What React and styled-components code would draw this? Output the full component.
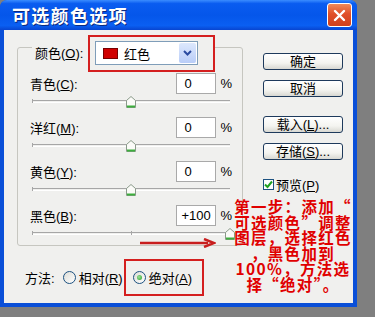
import React from 'react'
import styled, { createGlobalStyle } from 'styled-components';

const GlobalStyle = createGlobalStyle`
  html, body {
    margin: 0;
    padding: 0;
    background: #7f7f7f;
    width: 375px;
    height: 317px;
    overflow: hidden;
  }
  body {
    font-family: "Liberation Sans", "Noto Sans CJK SC", sans-serif;
    font-size: 13px;
    color: #000;
  }
`;

const Window = styled.div`
  position: relative;
  width: 357px;
  height: 307px;
  box-sizing: border-box;
  background: #0a4fd8;
  border-radius: 7px 7px 0 0;
  display: flex;
  flex-direction: column;
`;

const TitleBar = styled.div`
  height: 30px;
  display: flex;
  align-items: center;
  justify-content: space-between;
  padding: 0 5px 0 12px;
  border-radius: 7px 7px 0 0;
  background: linear-gradient(to bottom, #3a8cff 0%, #0a5cf0 12%, #0556ea 50%, #0a5ff2 85%, #0845d0 100%);
`;

const Title = styled.span`
  color: #fff;
  font-family: "Noto Sans CJK SC", sans-serif;
  font-weight: 700;
  font-size: 18px;
  letter-spacing: 1.3px;
  text-shadow: 1px 1px 0 #0a2a80;
`;

const CloseButton = styled.div`
  width: 23px;
  height: 22px;
  border: 1px solid #fff;
  border-radius: 3px;
  background: linear-gradient(to bottom, #f08a5a 0%, #e0502a 45%, #d0401c 100%);
  display: flex;
  align-items: center;
  justify-content: center;
`;

const Client = styled.div`
  margin: 0 4px 4px;
  height: 273px;
  background: #f0f0ee;
  display: flex;
  align-items: flex-start;
  gap: 20px;
  padding: 17px 0 0 13px;
  box-sizing: border-box;
`;

const LeftCol = styled.div`
  width: 226px;
  display: flex;
  flex-direction: column;
`;

const GroupBox = styled.div`
  height: 199px;
  box-sizing: border-box;
  border: 1px solid #c6c6c0;
  border-radius: 3px;
  display: flex;
  flex-direction: column;
`;

const Header = styled.div`
  display: flex;
  align-items: center;
  margin: -13px 0 0 14px;
`;

const Legend = styled.span`
  width: 56px;
  box-sizing: border-box;
  padding-left: 3px;
  background: #f0f0ee;
  line-height: 16px;
`;

const Highlight = styled.div`
  display: flex;
  align-items: center;
  border: 2px solid #d41f1f;
  padding: ${({ $pad }) => $pad};
  background: #f0f0ee;
`;

const Select = styled.div`
  width: 103px;
  height: 24px;
  box-sizing: border-box;
  border: 1px solid #7f9db9;
  background: #fff;
  display: flex;
  align-items: center;
  padding: 0 1px 0 7px;
  gap: 6px;
`;

const Swatch = styled.span`
  width: 15px;
  height: 11px;
  background: #d00000;
  border: 1px solid #700;
  box-sizing: border-box;
`;

const SelectText = styled.span`
  flex: 1;
`;

const SelectArrow = styled.span`
  width: 17px;
  height: 20px;
  background: linear-gradient(to bottom, #dde8fd, #b9cdf8);
  border-radius: 2px;
  display: flex;
  align-items: center;
  justify-content: center;
`;

const Channels = styled.div`
  margin-top: 1px;
`;

const ChannelRow = styled.div`
  height: 21px;
  display: flex;
  align-items: center;
  padding: 0 10px 0 12px;
`;

const ChannelLabel = styled.span`
  flex: 1;
`;

const Mnemonic = styled.span`
  text-decoration: underline;
`;

const NumberBox = styled.div`
  width: 40px;
  height: 21px;
  box-sizing: border-box;
  border: 1px solid #a9a9a9;
  background: #fff;
  padding-left: ${({ $wide }) => ($wide ? '4px' : '7px')};
  line-height: 19px;
`;

const Percent = styled.span`
  margin-left: 4px;
`;

const SliderArea = styled.div`
  position: relative;
  height: 23px;
  margin: 0 12px 0 14px;
`;

const Track = styled.div`
  position: absolute;
  left: 0;
  right: 0;
  top: 6px;
  height: 1px;
  border-top: 1px solid #a6a6a6;
  border-bottom: 1px solid #fff;
`;

const Tick = styled.span`
  position: absolute;
  top: 5px;
  width: 1px;
  height: 4px;
  background: #a6a6a6;
`;

const Thumb = styled.svg`
  position: absolute;
  top: 2px;
`;

const MethodRow = styled.div`
  margin-top: 13px;
  display: flex;
  align-items: center;
  padding-left: 8px;
`;

const MethodLabel = styled.span`
  margin-right: 8px;
`;

const RadioOption = styled.label`
  display: flex;
  align-items: center;
  gap: 3px;
  margin-right: ${({ $gap }) => $gap || 0}px;
`;

const RadioCircle = styled.span`
  width: 11px;
  height: 11px;
  border-radius: 50%;
  border: 1px solid #1c5180;
  background: linear-gradient(135deg, #dcdcd6, #fff);
  display: flex;
  align-items: center;
  justify-content: center;
`;

const RadioDot = styled.span`
  width: 5px;
  height: 5px;
  border-radius: 50%;
  background: radial-gradient(circle at 40% 40%, #9ee09a, #21a121);
`;

const RightCol = styled.div`
  display: flex;
  flex-direction: column;
  padding-top: 6px;
  width: 80px;
`;

const Button = styled.div`
  width: 80px;
  height: 17px;
  box-sizing: border-box;
  border: 1px solid #1e3a5c;
  border-radius: 3px;
  background: linear-gradient(to bottom, #ffffff 0%, #f4f4f0 60%, #d8d8d2 100%);
  display: flex;
  align-items: center;
  justify-content: center;
  line-height: 15px;
  margin-top: ${({ $gap }) => $gap || 0}px;
`;

const CheckRow = styled.label`
  display: flex;
  align-items: center;
  gap: 2px;
  margin-top: 19px;
  height: 11px;
`;

const CheckBox = styled.span`
  width: 11px;
  height: 11px;
  box-sizing: border-box;
  border: 1px solid #1c5180;
  background: #fff;
  display: flex;
  align-items: center;
  justify-content: center;
`;

const Annotation = styled.div`
  position: absolute;
  left: 227px;
  top: 199px;
  width: 132px;
  text-align: center;
  color: #e00000;
  font-family: "Noto Sans CJK SC", sans-serif;
  font-weight: 700;
  font-size: 15.5px;
  line-height: 15.6px;
  letter-spacing: 1.3px;
`;

const Arrow = styled.svg`
  position: absolute;
  left: 140px;
  top: 238px;
`;

const channels = [
  { name: '青色', key: 'C', value: 0 },
  { name: '洋红', key: 'M', value: 0 },
  { name: '黄色', key: 'Y', value: 0 },
  { name: '黑色', key: 'B', value: 100 },
];

const TRACK_WIDTH = 198;

function Channel({ name, mnemonic, value }) {
  const x = ((value + 100) / 200) * TRACK_WIDTH;
  return (
    <div>
      <ChannelRow>
        <ChannelLabel>{name}(<Mnemonic>{mnemonic}</Mnemonic>):</ChannelLabel>
        <NumberBox $wide={value !== 0}>{value > 0 ? `+${value}` : value}</NumberBox>
        <Percent>%</Percent>
      </ChannelRow>
      <SliderArea>
        <Track />
        <Tick style={{ left: 0 }} />
        <Tick style={{ left: TRACK_WIDTH / 2 }} />
        <Thumb width="10" height="12" viewBox="0 0 10 12" style={{ left: x - 5 }}>
          <path d="M5 0.5 L9.5 4.5 L9.5 11.5 L0.5 11.5 L0.5 4.5 Z" fill="#fbfbf8" stroke="#8a9a8a" />
          <path d="M1 10.5 L9 10.5" stroke="#3dae3d" strokeWidth="2" />
        </Thumb>
      </SliderArea>
    </div>
  );
}

export default function App() {
  return (
    <>
      <GlobalStyle />
      <Window>
        <TitleBar>
          <Title>可选颜色选项</Title>
          <CloseButton>
            <svg width="13" height="13" viewBox="0 0 13 13">
              <path d="M2 2 L11 11 M11 2 L2 11" stroke="#fff" strokeWidth="2.4" strokeLinecap="round" />
            </svg>
          </CloseButton>
        </TitleBar>
        <Client>
          <LeftCol>
            <GroupBox>
              <Header>
                <Legend>颜色(<Mnemonic>O</Mnemonic>):</Legend>
                <Highlight $pad="4px 15px 5px 5px">
                  <Select>
                    <Swatch />
                    <SelectText>红色</SelectText>
                    <SelectArrow>
                      <svg width="9" height="6" viewBox="0 0 9 6">
                        <path d="M1 1 L4.5 4.5 L8 1" stroke="#2a4aa0" strokeWidth="2" fill="none" />
                      </svg>
                    </SelectArrow>
                  </Select>
                </Highlight>
              </Header>
              <Channels>
                {channels.map(c => (
                  <Channel key={c.key} name={c.name} mnemonic={c.key} value={c.value} />
                ))}
              </Channels>
            </GroupBox>
            <MethodRow>
              <MethodLabel>方法:</MethodLabel>
              <RadioOption $gap={1}>
                <RadioCircle />
                <span>相对(<Mnemonic>R</Mnemonic>)</span>
              </RadioOption>
              <Highlight $pad="7px 10px 7px 7px">
                <RadioOption>
                  <RadioCircle><RadioDot /></RadioCircle>
                  <span>绝对(<Mnemonic>A</Mnemonic>)</span>
                </RadioOption>
              </Highlight>
            </MethodRow>
          </LeftCol>
          <RightCol>
            <Button>确定</Button>
            <Button $gap={10}>取消</Button>
            <Button $gap={19}>载入(<Mnemonic>L</Mnemonic>)...</Button>
            <Button $gap={10}>存储(<Mnemonic>S</Mnemonic>)...</Button>
            <CheckRow>
              <CheckBox>
                <svg width="9" height="9" viewBox="0 0 9 9">
                  <path d="M1 4.5 L3.5 7 L8 1.5" stroke="#21a121" strokeWidth="2" fill="none" />
                </svg>
              </CheckBox>
              <span>预览(<Mnemonic>P</Mnemonic>)</span>
            </CheckRow>
          </RightCol>
        </Client>
        <Arrow width="76" height="10" viewBox="0 0 76 10">
          <path d="M0 5 L68 5" stroke="#c81e1e" strokeWidth="2.5" />
          <path d="M64 1 L74 5 L64 9" stroke="#c81e1e" strokeWidth="2.5" fill="none" />
        </Arrow>
        <Annotation>
          第一步：添加“<br />
          可选颜色”调整<br />
          图层，选择红色<br />
          ，黑色加到<br />
          100%，方法选<br />
          择“绝对”。
        </Annotation>
      </Window>
    </>
  );
}
